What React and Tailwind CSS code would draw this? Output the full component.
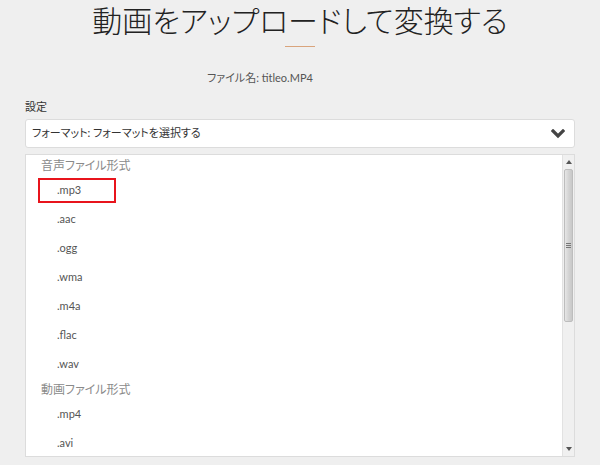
import React from 'react';

const audio = ['.mp3', '.aac', '.ogg', '.wma', '.m4a', '.flac', '.wav'];
const video = ['.mp4', '.avi'];

function GroupHeader({ label }) {
  return (
    <div className="h-[21px] flex items-center pl-[15px] text-[12px] text-[#8a8a8a]">{label}</div>
  );
}

function Item({ label, marked }) {
  if (marked) {
    return (
      <div className="h-[29px] flex items-center">
        <div className="ml-[12px] w-[78px] h-[25px] border-2 border-[#e8141c] flex items-center pl-[17px] text-[11px] text-[#555]">
          {label}
        </div>
      </div>
    );
  }
  return <div className="h-[29px] flex items-center pl-[31px] text-[11px] text-[#555]">{label}</div>;
}

function Scrollbar() {
  return (
    <div className="w-[12px] flex flex-col bg-[#f0f0f0] border-l border-[#e2e2e2]">
      <div className="h-[14px] flex items-center justify-center">
        <svg width="6" height="4" viewBox="0 0 6 4"><path d="M0 4 L3 0 L6 4 Z" fill="#555" /></svg>
      </div>
      <div className="h-[153px] mx-[1px] rounded-[2px] border border-[#bdbdbd] bg-gradient-to-r from-[#e6e6e6] via-[#d4d4d4] to-[#c8c8c8] flex items-center justify-center">
        <div className="flex flex-col gap-[1px]">
          <div className="w-[5px] h-[1px] bg-[#777]" />
          <div className="w-[5px] h-[1px] bg-[#777]" />
          <div className="w-[5px] h-[1px] bg-[#777]" />
        </div>
      </div>
      <div className="flex-1" />
      <div className="h-[14px] flex items-center justify-center">
        <svg width="6" height="4" viewBox="0 0 6 4"><path d="M0 0 L6 0 L3 4 Z" fill="#555" /></svg>
      </div>
    </div>
  );
}

export default function App() {
  return (
    <div
      className="w-[600px] h-[465px] bg-[#efefef] overflow-hidden px-[25px] [font-feature-settings:'palt']"
      style={{ fontFamily: 'Lato, "Noto Sans CJK JP", sans-serif' }}
    >
      <h1 className="h-[40px] flex items-center justify-center text-[30px] font-light text-[#222]">
        動画をアップロードして変換する
      </h1>
      <div className="mx-auto mt-[6px] w-[30px] h-[1px] bg-[#d9a47c]" />
      <div className="mt-[22px] h-[18px] flex items-center justify-center pr-[80px] text-[11px] text-[#555]">
        ファイル名: titleo.MP4
      </div>
      <div className="mt-[13px] h-[14px] flex items-center text-[11px] text-[#333]">設定</div>
      <div className="mt-[5px] h-[29px] bg-white border border-[#dcdcdc] rounded-[3px] flex items-center justify-between pl-[6px] pr-[9px] text-[11px] text-[#333]">
        <span>フォーマット: フォーマットを選択する</span>
        <svg width="14" height="10" viewBox="0 0 14 10">
          <path d="M2 2 L7 7 L12 2" fill="none" stroke="#444" strokeWidth="3.2" strokeLinecap="square" />
        </svg>
      </div>
      <div className="mt-[6px] h-[303px] bg-white border border-[#dcdcdc] flex">
        <div className="flex-1 overflow-hidden">
          <GroupHeader label="音声ファイル形式" />
          {audio.map((a, i) => (
            <Item key={a} label={a} marked={i === 0} />
          ))}
          <GroupHeader label="動画ファイル形式" />
          {video.map((v) => (
            <Item key={v} label={v} />
          ))}
        </div>
        <Scrollbar />
      </div>
    </div>
  );
}
